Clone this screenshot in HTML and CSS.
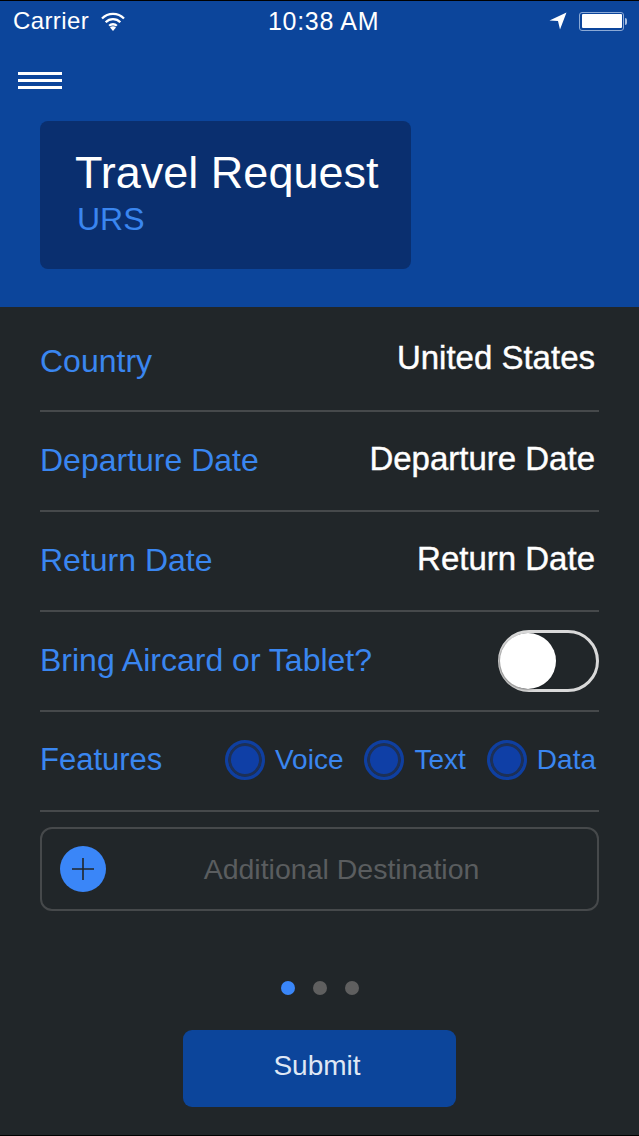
FILE: index.html
```html
<!DOCTYPE html>
<html lang="en">
<head>
<meta charset="utf-8">
<title>Travel Request</title>
<link rel="stylesheet" href="styles.css">
</head>
<body>
<div class="app">
  <header class="header">
    <div class="status">
      <div class="status-left">
        <span>Carrier</span>
        <svg class="wifi" width="24" height="20" viewBox="0 0 24 20"><path d="M1 7.500a15.500 15.500 0 0 1 22 0M4.700 11.200a10.300 10.300 0 0 1 14.600 0M8.200 14.800a5.400 5.400 0 0 1 7.600 0" fill="none" stroke="#fff" stroke-width="2.300"/><path d="M12 20l-3-3.400a4.200 4.200 0 0 1 6 0z" fill="#fff"/></svg>
      </div>
      <span class="time">10:38 AM</span>
      <div class="status-right">
        <svg width="18" height="18" viewBox="0 0 18 18"><path d="M0.500 8.500L17.500 0.500 11 17.500 9 9z" fill="#fff"/></svg>
        <div class="battery"><div class="battery-fill"></div></div>
        <div class="battery-tip"></div>
      </div>
    </div>
    <div class="menu"><i></i><i></i><i></i></div>
    <div class="title-card">
      <div class="title">Travel Request</div>
      <div class="subtitle">URS</div>
    </div>
  </header>
  <main class="content">
    <div class="row row-first"><span class="label">Country</span><span class="value">United States</span></div>
    <div class="row"><span class="label">Departure Date</span><span class="value">Departure Date</span></div>
    <div class="row"><span class="label">Return Date</span><span class="value">Return Date</span></div>
    <div class="row"><span class="label">Bring Aircard or Tablet?</span><div class="switch"><div class="knob"></div></div></div>
    <div class="row"><span class="label label-features">Features</span>
      <div class="features">
        <div class="feature"><span class="radio"></span><span>Voice</span></div>
        <div class="feature"><span class="radio"></span><span>Text</span></div>
        <div class="feature"><span class="radio"></span><span>Data</span></div>
      </div>
    </div>
    <div class="add">
      <div class="add-btn"><svg width="24" height="24" viewBox="0 0 24 24"><path d="M12 1v22M1 12h22" stroke="#212629" stroke-width="1.600"/></svg></div>
      <span class="add-text">Additional Destination</span>
    </div>
    <div class="dots"><i class="dot on"></i><i class="dot"></i><i class="dot"></i></div>
    <button class="submit">Submit</button>
  </main>
</div>
</body>
</html>
```
FILE: styles.css
```css
* { box-sizing: border-box; }
html, body { margin: 0; padding: 0; background: #000; }
body { font-family: "Liberation Sans", Arial, sans-serif; }
.app { width: 639px; height: 1136px; padding: 1px 0; display: flex; flex-direction: column; overflow: hidden; }
.header { height: 306px; background: #0c459b; flex: none; }
.status { height: 40px; padding: 0 12px 0 13px; display: flex; align-items: center; justify-content: space-between; position: relative; color: #fff; font-size: 24px; letter-spacing: 0.4px; }
.status-left { display: flex; align-items: center; gap: 12px; }
.wifi { margin-top: -1px; }
.time { position: absolute; left: 268px; top: 6px; font-size: 25px; line-height: 28px; letter-spacing: 0.7px; }
.status-right { display: flex; align-items: center; }
.status-right svg { margin-right: 12px; }
.battery { width: 45px; height: 19px; border: 1.500px solid #8ba9d6; border-radius: 3px; padding: 1.500px; }
.battery-fill { width: 100%; height: 100%; background: #fff; border-radius: 1px; }
.battery-tip { width: 2px; height: 7px; background: #a8bfe0; margin-left: 1px; border-radius: 0 2px 2px 0; }
.menu { margin: 31px 0 0 18px; width: 44px; display: flex; flex-direction: column; gap: 4px; }
.menu i { display: block; height: 3px; background: #fff; }
.title-card { margin: 32px 0 0 40px; width: 371px; height: 148px; background: #0a2f6f; border-radius: 8px; padding: 26px 0 0 35px; }
.title { color: #fff; font-size: 45px; line-height: 52px; }
.subtitle { color: #3a86f0; font-size: 32px; line-height: 36px; margin: 2px 0 0 2px; }
.content { flex: 1; background: #212629; padding: 0 40px; display: flex; flex-direction: column; }
.row { flex: none; height: 100px; display: flex; align-items: center; justify-content: space-between; border-bottom: 2px solid #46494b; }
.row-first { height: 105px; padding-top: 7px; }
.label { color: #3a86f0; font-size: 32px; margin-top: -2px; }
.label-features { font-size: 31px; }
.value { color: #fff; font-size: 33px; margin: -5px 4px 0 0; -webkit-text-stroke: 0.4px #fff; }
.row-first .value { margin-top: -9px; }
.switch { width: 101px; height: 62px; border: 3px solid #d9d9d9; border-radius: 31px; position: relative; }
.knob { position: absolute; left: -1px; top: 0; width: 56px; height: 56px; border-radius: 50%; background: #fff; box-shadow: -1px 1px 2px rgba(0,0,0,.35); }
.features { display: flex; align-items: center; gap: 21px; color: #3a86f0; font-size: 28px; margin: -3px 3px 0 0; }
.feature { display: flex; align-items: center; gap: 10px; }
.radio { width: 40px; height: 40px; border-radius: 50%; background: #0f3fa6; border: 3px solid #0f3fa0; box-shadow: inset 0 0 0 3px #1d3056; }
.add { flex: none; height: 84px; margin-top: 15px; border: 2px solid #46494b; border-radius: 12px; display: flex; align-items: center; padding: 0 20px 0 18px; }
.add-btn { flex: none; width: 46px; height: 46px; border-radius: 50%; background: #3a86f8; display: flex; align-items: center; justify-content: center; }
.add-text { flex: 1; text-align: center; color: #5a5d5f; font-size: 28.500px; }
.dots { flex: none; margin-top: 70px; display: flex; justify-content: center; gap: 18px; }
.dot { width: 14px; height: 14px; border-radius: 50%; background: #5f5f5f; }
.dot.on { background: #3a86f8; }
.submit { align-self: center; margin: 35px 0 0; width: 273px; height: 77px; border: 0; border-radius: 9px; background: #0c459b; color: #dfe7f4; font: 28px "Liberation Sans", Arial, sans-serif; padding: 0 5px 6px 0; }
```
